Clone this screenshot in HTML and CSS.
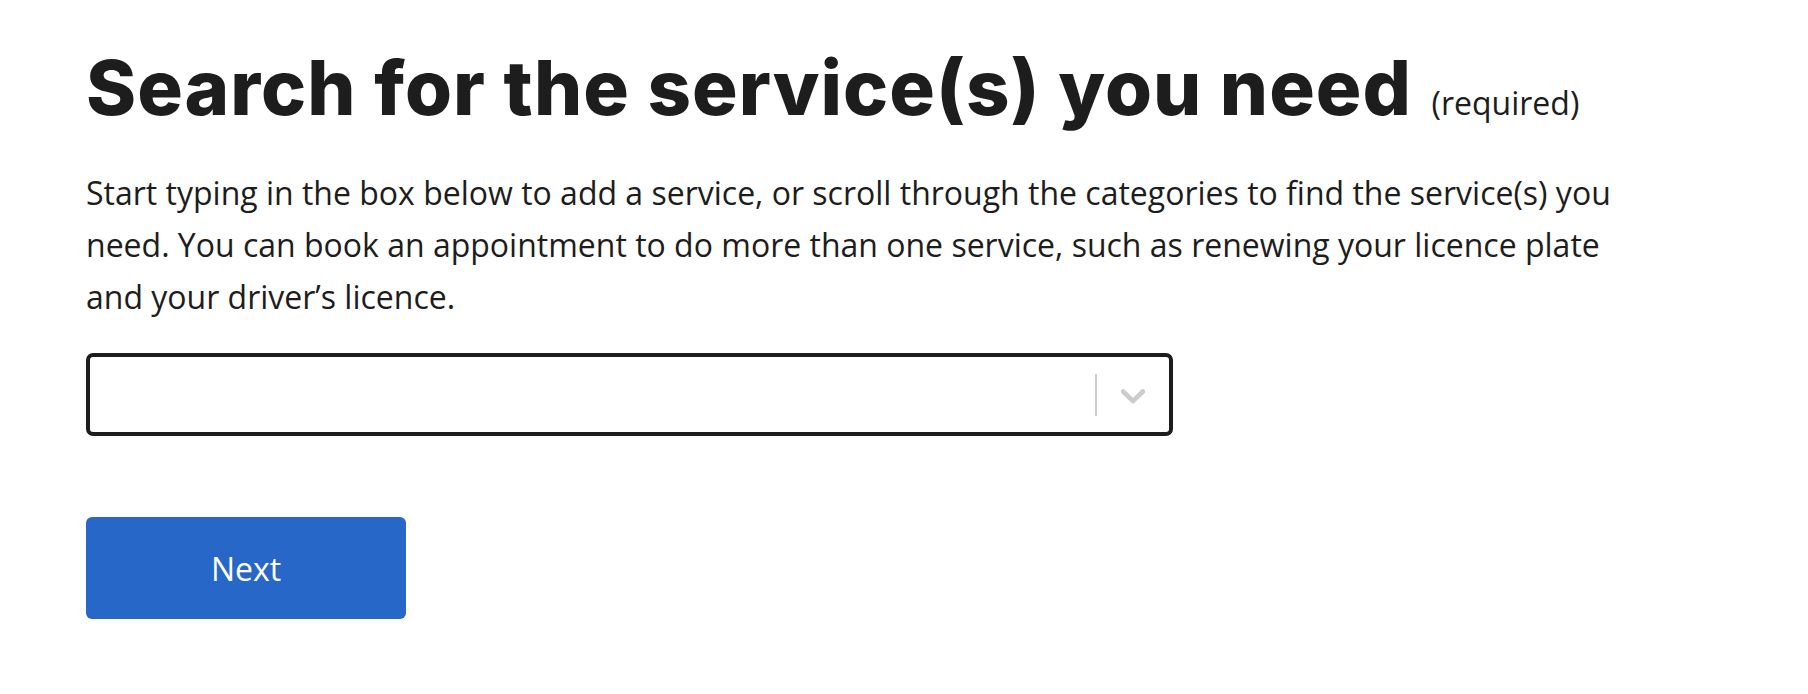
FILE: index.html
```html
<!DOCTYPE html>
<html lang="en">
<head>
<meta charset="utf-8">
<title>Search for the service(s) you need</title>
<link rel="stylesheet" href="styles.css">
</head>
<body>
<main class="page">
  <h1 class="title">Search for the service(s) you need <span class="req">(required)</span></h1>
  <p class="intro">Start typing in the box below to add a service, or scroll through the categories to find the service(s) you need. You can book an appointment to do more than one service, such as renewing your licence plate and your driver’s licence.</p>
  <div class="select">
    <div class="select-value"></div>
    <div class="select-indicators">
      <span class="sep"></span>
      <span class="chev">
        <svg width="42" height="42" viewBox="0 0 20 20"><path d="M4.516 7.548c.436-.446 1.043-.481 1.576 0L10 11.295l3.908-3.747c.533-.481 1.141-.446 1.574 0 .436.445.408 1.197 0 1.615-.406.418-4.695 4.502-4.695 4.502a1.095 1.095 0 0 1-1.576 0S4.924 9.581 4.516 9.163c-.409-.418-.436-1.17 0-1.615z" fill="#cccccc"/></svg>
      </span>
    </div>
  </div>
  <button class="btn" type="button">Next</button>
</main>
</body>
</html>
```

FILE: styles.css
```css
html, body {
  margin: 0;
  padding: 0;
  background: #ffffff;
}

.page {
  padding: 43px 0 0 86px;
  display: flex;
  flex-direction: column;
  align-items: flex-start;
  color: #1d1d1d;
}

.title {
  margin: 0;
  font-family: Inter, "Liberation Sans", sans-serif;
  font-weight: 800;
  font-size: 76px;
  line-height: 89px;
  letter-spacing: 1px;
  color: #1d1d1d;
  white-space: nowrap;
}

.req {
  font-family: "Open Sans", sans-serif;
  font-weight: 400;
  font-size: 32px;
  line-height: normal;
  letter-spacing: 0;
  margin-left: 2px;
}

.intro {
  margin: 35px 0 0 0;
  width: 1540px;
  font-family: "Open Sans", sans-serif;
  font-size: 32px;
  line-height: 52px;
  color: #1d1d1d;
}

.select {
  margin-top: 30px;
  box-sizing: border-box;
  width: 1087px;
  height: 83px;
  border: 4px solid #1d1d1d;
  border-radius: 7px;
  display: flex;
  align-items: center;
  background: #fff;
}

.select-value {
  flex: 1;
}

.select-indicators {
  display: flex;
  align-items: center;
  align-self: stretch;
}

.sep {
  width: 2px;
  height: 42px;
  background: #cccccc;
}

.chev {
  display: flex;
  align-items: center;
  justify-content: center;
  width: 72px;
}

.btn {
  margin-top: 81px;
  width: 320px;
  height: 102px;
  border: 0;
  border-radius: 6px;
  background: #2767c8;
  color: #ffffff;
  font-family: "Open Sans", sans-serif;
  font-size: 32px;
  padding: 0;
  cursor: pointer;
}
```
